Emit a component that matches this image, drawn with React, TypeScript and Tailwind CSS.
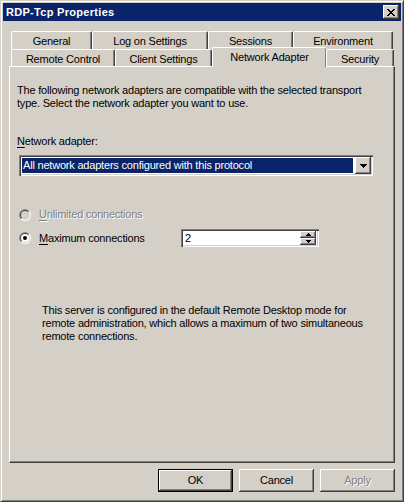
import React from "react";

// classic bevels
const raised =
  "shadow-[inset_-1px_-1px_#404040,inset_1px_1px_#ffffff,inset_-2px_-2px_#808080,inset_2px_2px_#d4d0c8]";
const sunken =
  "shadow-[inset_1px_1px_#808080,inset_2px_2px_#404040,inset_-1px_-1px_#ffffff,inset_-2px_-2px_#d4d0c8]";

function CloseGlyph() {
  // 8x7 pixel "x" like the Marlett glyph
  const rows = ["11000011", "01100110", "00111100", "00011000", "00111100", "01100110", "11000011"];
  return (
    <svg width="8" height="7" viewBox="0 0 8 7" shapeRendering="crispEdges">
      {rows.map((r, y) =>
        r.split("").map((c, x) => (c === "1" ? <rect key={`${x}-${y}`} x={x} y={y} width="1" height="1" fill="#000" /> : null))
      )}
    </svg>
  );
}

function DownArrow({ w = 7 }: { w?: number }) {
  const h = Math.ceil(w / 2);
  return (
    <svg width={w} height={h} viewBox={`0 0 ${w} ${h}`} shapeRendering="crispEdges">
      {Array.from({ length: h }).map((_, i) => (
        <rect key={i} x={i} y={i} width={w - i * 2} height="1" fill="#000" />
      ))}
    </svg>
  );
}

function UpArrow({ w = 5 }: { w?: number }) {
  const h = Math.ceil(w / 2);
  return (
    <svg width={w} height={h} viewBox={`0 0 ${w} ${h}`} shapeRendering="crispEdges">
      {Array.from({ length: h }).map((_, i) => (
        <rect key={i} x={h - 1 - i} y={i} width={w - (h - 1 - i) * 2} height="1" fill="#000" />
      ))}
    </svg>
  );
}

function Radio({ checked, disabled }: { checked?: boolean; disabled?: boolean }) {
  const half = (r: number) => {
    const d = r * 0.7071;
    return `M6 6 L${6 - d} ${6 + d} A${r} ${r} 0 0 1 ${6 + d} ${6 - d} Z`;
  };
  return (
    <svg width="12" height="12" viewBox="0 0 12 12" className="shrink-0">
      <circle cx="6" cy="6" r="6" fill="#ffffff" />
      <path d={half(6)} fill="#808080" />
      <circle cx="6" cy="6" r="5" fill="#d4d0c8" />
      <path d={half(5)} fill="#404040" />
      <circle cx="6" cy="6" r="4" fill={disabled ? "#d4d0c8" : "#ffffff"} />
      {checked && <circle cx="6" cy="6" r="2" fill="#000" />}
    </svg>
  );
}

function Tab({ label, className }: { label: string; className: string }) {
  return (
    <div
      className={`flex justify-center pt-[3px] bg-[#d4d0c8] border-l border-t border-white border-r border-r-[#404040] rounded-tl-[2px] rounded-tr-[2px] shadow-[inset_-1px_0_#808080] leading-[13px] whitespace-nowrap ${className}`}
    >
      {label}
    </div>
  );
}

function Button({ label, isDefault, disabled }: { label: string; isDefault?: boolean; disabled?: boolean }) {
  return (
    <div
      className={`w-[75px] h-[23px] flex items-center justify-center bg-[#d4d0c8] ${
        isDefault ? "border border-black" : ""
      }`}
    >
      <div className={`w-full h-full flex items-center justify-center ${raised}`}>
        <span className={disabled ? "text-[#808080] [text-shadow:1px_1px_#ffffff]" : ""}>{label}</span>
      </div>
    </div>
  );
}

export default function App() {
  return (
    <div className="w-[404px] h-[502px] bg-[#d4d0c8] text-black text-[11px] leading-[13px] tracking-[-0.2px] font-['Liberation_Sans',Arial,sans-serif] select-none">
      {/* window frame */}
      <div className="w-full h-full border border-t-[#d4d0c8] border-l-[#d4d0c8] border-r-[#404040] border-b-[#404040] shadow-[inset_1px_1px_#ffffff,inset_-1px_-1px_#808080] p-[2px] flex flex-col">
        {/* title bar */}
        <div className="h-[18px] bg-[#0a246a] flex items-center pl-[3px] pr-[2px]">
          <span className="text-white font-bold tracking-[0.3px]">RDP-Tcp Properties</span>
          <div className={`ml-auto w-[16px] h-[14px] bg-[#d4d0c8] flex items-center justify-center ${raised}`}>
            <CloseGlyph />
          </div>
        </div>

        {/* body */}
        <div className="px-[6px] pt-[10px] flex flex-col">
          {/* tab rows */}
          <div className="flex h-[18px] ml-[2px]">
            <Tab label="General" className="w-[81px] h-[18px]" />
            <Tab label="Log on Settings" className="w-[116px] h-[18px]" />
            <Tab label="Sessions" className="w-[85px] h-[18px]" />
            <Tab label="Environment" className="w-[100px] h-[18px]" />
          </div>
          <div className="flex h-[17px] items-end ml-[2px]">
            <Tab label="Remote Control" className="w-[104px] h-[17px]" />
            <Tab label="Client Settings" className="w-[97px] h-[17px]" />
            <Tab label="Network Adapter" className="relative z-10 w-[114px] h-[20px] mb-[-1px] border-r-0 shadow-[inset_-1px_0_#404040,inset_-2px_0_#808080] rounded-none" />
            <Tab label="Security" className="w-[68px] h-[17px]" />
          </div>

          {/* panel */}
          <div className="w-[386px] h-[397px] border border-t-white border-l-white border-r-[#404040] border-b-[#404040] shadow-[inset_-1px_-1px_#808080] flex flex-col">
            <p className="mt-[17px] ml-[7px] w-[360px]">
              The following network adapters are compatible with the selected transport type. Select the network adapter you
              want to use.
            </p>

            <div className="mt-[25px] ml-[7px]">
              <span className="underline underline-offset-2">N</span>etwork adapter:
            </div>

            {/* dropdown */}
            <div className={`mt-[7px] ml-[9px] w-[354px] h-[21px] bg-white p-[2px] flex ${sunken}`}>
              <div className="flex-1 p-[1px] flex">
                <div className="flex-1 bg-[#0a246a] text-white flex items-center pl-[1px] mr-[1px]">
                  All network adapters configured with this protocol
                </div>
              </div>
              <div className={`w-[16px] h-[17px] bg-[#d4d0c8] flex items-center justify-center ${raised}`}>
                <DownArrow w={7} />
              </div>
            </div>

            {/* radios */}
            <div className="mt-[32px] ml-[9px] flex items-center h-[13px] gap-[8px]">
              <Radio disabled />
              <span className="text-[#808080] [text-shadow:1px_1px_#ffffff]">
                <span className="underline underline-offset-2">U</span>nlimited connections
              </span>
            </div>

            <div className="mt-[8px] ml-[9px] flex items-center h-[18px]">
              <Radio checked />
              <span className="ml-[8px] w-[142px]">
                <span className="underline underline-offset-2">M</span>aximum connections
              </span>
              <div className={`w-[138px] h-[18px] bg-white p-[2px] flex ${sunken}`}>
                <div className="flex-1 flex items-center pl-[2px] pt-[1px]">2</div>
                <div className="w-[16px] flex flex-col mr-[1px]">
                  <div className={`h-[7px] bg-[#d4d0c8] flex items-center justify-center ${raised}`}>
                    <UpArrow w={5} />
                  </div>
                  <div className={`h-[7px] bg-[#d4d0c8] flex items-center justify-center ${raised}`}>
                    <DownArrow w={5} />
                  </div>
                </div>
              </div>
            </div>

            <p className="mt-[57px] ml-[32px] w-[330px]">
              This server is configured in the default Remote Desktop mode for remote administration, which allows a maximum of
              two simultaneous remote connections.
            </p>
          </div>

          {/* buttons */}
          <div className="mt-[6px] flex justify-end gap-[6px]">
            <Button label="OK" isDefault />
            <Button label="Cancel" />
            <Button label="Apply" disabled />
          </div>
        </div>
      </div>
    </div>
  );
}
